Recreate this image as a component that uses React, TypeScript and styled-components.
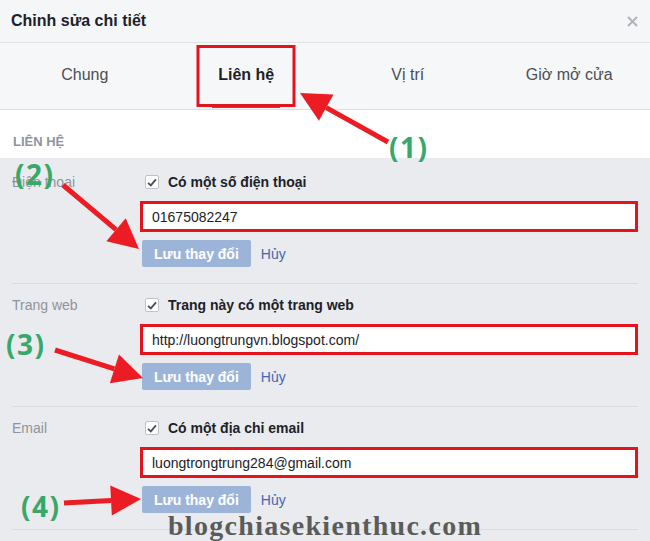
import { FC } from "react";
import styled, { createGlobalStyle } from "styled-components";

interface IArrow {
    from: [number, number];
    to: [number, number];
}

interface IContactRow {
    label: string;
    check: string;
    value: string;
}

const tabs = ["Chung", "Liên hệ", "Vị trí", "Giờ mở cửa"];

const rows: IContactRow[] = [
    { label: "Điện thoại", check: "Có một số điện thoại", value: "01675082247" },
    { label: "Trang web", check: "Trang này có một trang web", value: "http://luongtrungvn.blogspot.com/" },
    { label: "Email", check: "Có một địa chỉ email", value: "luongtrongtrung284@gmail.com" },
];

const arrows: IArrow[] = [
    { from: [388, 142], to: [300, 93] },
    { from: [63, 185], to: [139, 249] },
    { from: [55, 350], to: [143, 378] },
    { from: [64, 503], to: [141, 499] },
];

const callouts = [
    { text: "(1)", x: 389, y: 128 },
    { text: "(2)", x: 15, y: 155 },
    { text: "(3)", x: 6, y: 325 },
    { text: "(4)", x: 21, y: 487 },
];

const headPoints = ({ from, to }: IArrow) => {
    const dx = to[0] - from[0];
    const dy = to[1] - from[1];
    const len = Math.hypot(dx, dy);
    const ux = dx / len;
    const uy = dy / len;
    const L = 30;
    const W = 15;
    const bx = to[0] - ux * L;
    const by = to[1] - uy * L;
    return {
        base: [bx, by],
        points: `${to[0]},${to[1]} ${bx - uy * W},${by + ux * W} ${bx + uy * W},${by - ux * W}`,
    };
};

const CheckIcon: FC = () => (
    <svg width="10" height="9" viewBox="0 0 10 9">
        <path d="M1 4.8 L3.8 7.4 L9 1.4" fill="none" stroke="#4b4f56" strokeWidth="1.8" />
    </svg>
);

const App: FC = () => {
    return (
        <>
            <GlobalStyle />
            <Page>
                <Header>
                    <Title>Chỉnh sửa chi tiết</Title>
                    <svg width="11" height="11" viewBox="0 0 11 11">
                        <path d="M1 1 L10 10 M10 1 L1 10" stroke="#b0b4bb" strokeWidth="2" />
                    </svg>
                </Header>

                <TabBar>
                    {tabs.map((t, i) => (
                        <Tab key={t} $active={i === 1}>{t}</Tab>
                    ))}
                </TabBar>

                <SectionHead>LIÊN HỆ</SectionHead>

                <Body>
                    {rows.map((r) => (
                        <Row key={r.label}>
                            <FieldLabel>{r.label}</FieldLabel>
                            <Field>
                                <CheckLine>
                                    <CheckBox><CheckIcon /></CheckBox>
                                    {r.check}
                                </CheckLine>
                                <TextBox>{r.value}</TextBox>
                                <Actions>
                                    <SaveButton>Lưu thay đổi</SaveButton>
                                    <CancelLink>Hủy</CancelLink>
                                </Actions>
                            </Field>
                        </Row>
                    ))}
                </Body>

                <Overlay width="650" height="541" viewBox="0 0 650 541">
                    {arrows.map((a, i) => {
                        const h = headPoints(a);
                        return (
                            <g key={i}>
                                <line x1={a.from[0]} y1={a.from[1]} x2={h.base[0]} y2={h.base[1]} stroke="#ec1c24" strokeWidth="5" />
                                <polygon points={h.points} fill="#ec1c24" />
                            </g>
                        );
                    })}
                </Overlay>

                {callouts.map((c) => (
                    <Callout key={c.text} style={{ left: c.x, top: c.y }}>{c.text}</Callout>
                ))}

                <Watermark>blogchiasekienthuc.com</Watermark>
            </Page>
        </>
    );
};

export default App;

const GlobalStyle = createGlobalStyle`
    body {
        margin: 0;
        background: #e9ebee;
        font-family: "Liberation Sans", Arial, sans-serif;
    }
`;

const Page = styled.div`
    position: relative;
    width: 650px;
    height: 541px;
    overflow: hidden;
    background: #e9ebee;
`;

const Header = styled.div`
    height: 42px;
    padding: 0 12px 0 11px;

    display: flex;
    align-items: center;
    justify-content: space-between;

    background: #f5f6f7;
    border-bottom: 1px solid #e2e3e5;
`;

const Title = styled.div`
    font-size: 16px;
    font-weight: bold;
    color: #1d2129;
`;

const TabBar = styled.div`
    height: 66px;
    padding-left: 4px;

    display: grid;
    grid-template-columns: repeat(4, 1fr);

    background: #f6f7f9;
    border-bottom: 1px solid #dddfe2;
`;

const Tab = styled.div<{ $active?: boolean }>`
    position: relative;

    display: flex;
    align-items: center;
    justify-content: center;
    padding-bottom: 2px;

    font-size: 16px;
    font-weight: ${(p) => (p.$active ? "bold" : "normal")};
    color: ${(p) => (p.$active ? "#1d2129" : "#4b4f56")};

    &::before {
        content: "";
        display: ${(p) => (p.$active ? "block" : "none")};
        position: absolute;
        left: 50%;
        bottom: 1px;
        width: 68px;
        height: 3px;
        transform: translateX(-50%);
        background: #7b4ea0;
    }

    &::after {
        content: "";
        display: ${(p) => (p.$active ? "block" : "none")};
        position: absolute;
        left: 50%;
        top: 2px;
        bottom: 2px;
        width: 99px;
        transform: translateX(-50%);
        box-sizing: border-box;
        border: 3px solid #e3141d;
    }
`;

const SectionHead = styled.div`
    height: 48px;
    padding: 0 13px 9px;
    box-sizing: border-box;

    display: flex;
    align-items: flex-end;

    background: #fff;
    font-size: 13px;
    font-weight: bold;
    color: #90949c;
`;

const Body = styled.div`
    padding: 3px 12px 0;
`;

const Row = styled.div`
    padding: 11px 0 16px;

    display: grid;
    grid-template-columns: 128px 1fr;

    border-bottom: 1px solid #d9dbdf;
`;

const FieldLabel = styled.div`
    height: 20px;
    line-height: 20px;
    font-size: 14px;
    color: #90949c;
`;

const Field = styled.div`
    display: flex;
    flex-direction: column;
`;

const CheckLine = styled.div`
    height: 20px;
    padding-left: 5px;

    display: flex;
    align-items: center;
    gap: 9px;

    font-size: 14px;
    font-weight: bold;
    color: #1d2129;
`;

const CheckBox = styled.span`
    width: 14px;
    height: 14px;
    box-sizing: border-box;

    display: flex;
    align-items: center;
    justify-content: center;

    background: #fff;
    border: 1px solid #bec3c9;
    border-radius: 2px;
`;

const TextBox = styled.div`
    height: 31px;
    margin-top: 9px;
    padding-left: 9px;
    box-sizing: border-box;

    display: flex;
    align-items: center;

    background: #fff;
    border: 3px solid #e3141d;
    font-size: 14px;
    color: #1d2129;
`;

const Actions = styled.div`
    margin-top: 8px;
    padding-left: 2px;

    display: flex;
    align-items: center;
    gap: 10px;
`;

const SaveButton = styled.button`
    height: 27px;
    padding: 0 12px;

    background: #9cb4d8;
    border: none;
    border-radius: 2px;

    font-family: inherit;
    font-size: 14px;
    font-weight: bold;
    color: #fff;
`;

const CancelLink = styled.span`
    font-size: 14px;
    color: #4267b2;
`;

const Overlay = styled.svg`
    position: absolute;
    left: 0;
    top: 0;
    pointer-events: none;
`;

const Callout = styled.div`
    position: absolute;
    font-family: "Open Sans", sans-serif;
    font-size: 28px;
    font-weight: bold;
    letter-spacing: 1.5px;
    color: #36a86a;
`;

const Watermark = styled.div`
    position: absolute;
    left: 168px;
    top: 510px;

    font-family: "Liberation Serif", "DejaVu Serif", serif;
    font-size: 28px;
    font-weight: bold;
    letter-spacing: 1.3px;
    color: #5b5b5b;
`;
